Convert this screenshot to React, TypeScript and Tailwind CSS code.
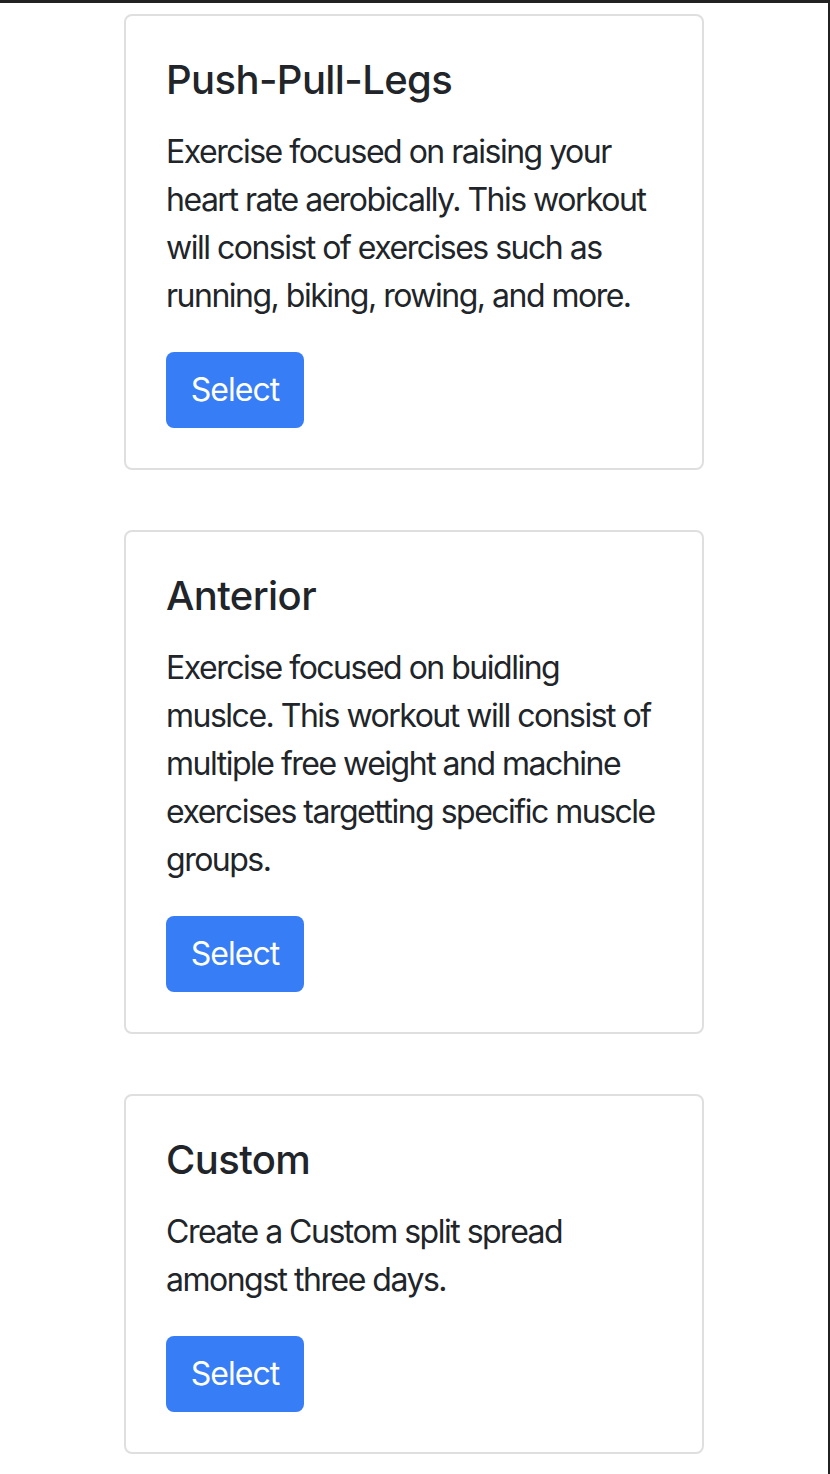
const plans = [
  {
    title: 'Push-Pull-Legs',
    lines: [
      'Exercise focused on raising your',
      'heart rate aerobically. This workout',
      'will consist of exercises such as',
      'running, biking, rowing, and more.',
    ],
  },
  {
    title: 'Anterior',
    lines: [
      'Exercise focused on buidling',
      'muslce. This workout will consist of',
      'multiple free weight and machine',
      'exercises targetting specific muscle',
      'groups.',
    ],
  },
  {
    title: 'Custom',
    lines: ['Create a Custom split spread', 'amongst three days.'],
  },
];

function PlanCard({ title, lines }: { title: string; lines: string[] }) {
  return (
    <div className="w-[580px] rounded-[8px] border-2 border-[#dfdfdf] bg-white p-10">
      <h5 className="mb-6 text-[40px] font-medium leading-[48px] tracking-[-0.6px] text-[#212529]">{title}</h5>
      <p className="mb-8 text-[32px] leading-[48px] tracking-[-1.5px] text-[#212529]">
        {lines.map((l, i) => (
          <span key={i} className="block whitespace-nowrap">
            {l}
          </span>
        ))}
      </p>
      <button className="h-[76px] w-[138px] rounded-[8px] bg-[#377df6] text-[32px] leading-[48px] tracking-[-1px] text-white">
        Select
      </button>
    </div>
  );
}

export default function App() {
  return (
    <div className="min-h-[1474px] border-t-[3px] border-r-2 border-[#222] bg-white font-['Inter','Roboto',sans-serif]">
      <div className="flex flex-col items-center gap-[60px] pt-[11px]">
        {plans.map((p) => (
          <PlanCard key={p.title} title={p.title} lines={p.lines} />
        ))}
      </div>
    </div>
  );
}
